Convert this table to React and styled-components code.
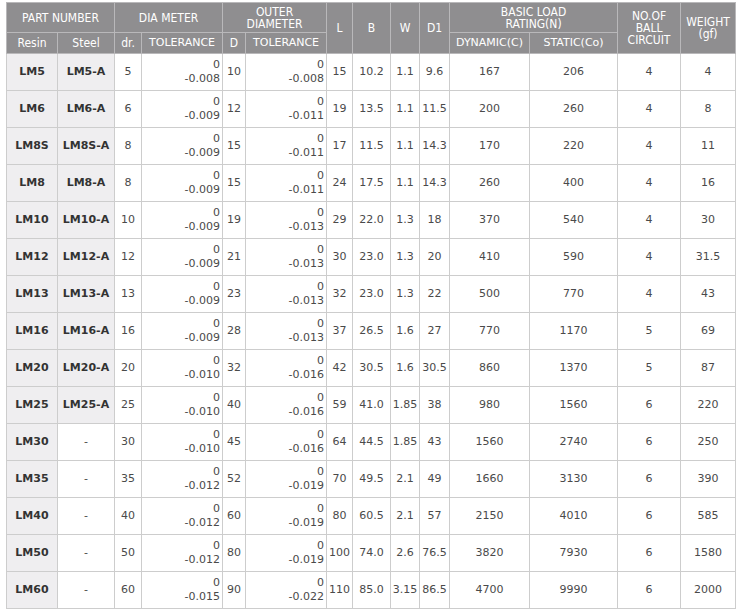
import React from "react";
import styled, { createGlobalStyle } from "styled-components";

const GlobalStyle = createGlobalStyle`
  body {
    margin: 0;
    background: #ffffff;
  }
`;

const Page = styled.div`
  padding: 2px 0 0 6px;
`;

const Table = styled.table`
  border-collapse: collapse;
  table-layout: fixed;
  width: 729px;
  font-family: "DejaVu Sans", Verdana, sans-serif;
  font-size: 11px;
  color: #4a4a4a;
`;

const Head = styled.th`
  background: #8f8e90;
  color: #ffffff;
  font-weight: normal;
  font-family: ${(p) =>
    p.wide
      ? '"DejaVu Sans", Verdana, sans-serif'
      : '"DejaVu Sans Condensed", "Liberation Sans", sans-serif'};
  font-size: ${(p) => (p.wide ? "11px" : "12px")};
  line-height: 12px;
  border: 1px solid #b9b8ba;
  padding: 0;
  height: ${(p) => p.h || "auto"};
  text-align: center;
  vertical-align: middle;
`;

const Row = styled.tr`
  height: 37px;
`;

const Cell = styled.td`
  border: 1px solid #cdcdcd;
  padding: 0 ${(p) => (p.right ? "2px" : "0")} 0 0;
  text-align: ${(p) => (p.right ? "right" : "center")};
  vertical-align: middle;
  line-height: 14px;
  background: ${(p) => (p.shade ? "#efeef0" : "#ffffff")};
  font-weight: ${(p) => (p.bold ? "bold" : "normal")};
  color: ${(p) => (p.bold ? "#333333" : "#4a4a4a")};
`;

const Tol = styled.span`
  display: block;
`;

const widths = [51, 57, 27, 81, 23, 81, 26, 38, 29, 30, 80, 88, 63, 55];

const rows = [
  ["LM5", "LM5-A", "5", "-0.008", "10", "-0.008", "15", "10.2", "1.1", "9.6", "167", "206", "4", "4"],
  ["LM6", "LM6-A", "6", "-0.009", "12", "-0.011", "19", "13.5", "1.1", "11.5", "200", "260", "4", "8"],
  ["LM8S", "LM8S-A", "8", "-0.009", "15", "-0.011", "17", "11.5", "1.1", "14.3", "170", "220", "4", "11"],
  ["LM8", "LM8-A", "8", "-0.009", "15", "-0.011", "24", "17.5", "1.1", "14.3", "260", "400", "4", "16"],
  ["LM10", "LM10-A", "10", "-0.009", "19", "-0.013", "29", "22.0", "1.3", "18", "370", "540", "4", "30"],
  ["LM12", "LM12-A", "12", "-0.009", "21", "-0.013", "30", "23.0", "1.3", "20", "410", "590", "4", "31.5"],
  ["LM13", "LM13-A", "13", "-0.009", "23", "-0.013", "32", "23.0", "1.3", "22", "500", "770", "4", "43"],
  ["LM16", "LM16-A", "16", "-0.009", "28", "-0.013", "37", "26.5", "1.6", "27", "770", "1170", "5", "69"],
  ["LM20", "LM20-A", "20", "-0.010", "32", "-0.016", "42", "30.5", "1.6", "30.5", "860", "1370", "5", "87"],
  ["LM25", "LM25-A", "25", "-0.010", "40", "-0.016", "59", "41.0", "1.85", "38", "980", "1560", "6", "220"],
  ["LM30", "-", "30", "-0.010", "45", "-0.016", "64", "44.5", "1.85", "43", "1560", "2740", "6", "250"],
  ["LM35", "-", "35", "-0.012", "52", "-0.019", "70", "49.5", "2.1", "49", "1660", "3130", "6", "390"],
  ["LM40", "-", "40", "-0.012", "60", "-0.019", "80", "60.5", "2.1", "57", "2150", "4010", "6", "585"],
  ["LM50", "-", "50", "-0.012", "80", "-0.019", "100", "74.0", "2.6", "76.5", "3820", "7930", "6", "1580"],
  ["LM60", "-", "60", "-0.015", "90", "-0.022", "110", "85.0", "3.15", "86.5", "4700", "9990", "6", "2000"],
];

const Tolerance = ({ value }) => (
  <Cell right>
    <Tol>0</Tol>
    <Tol>{value}</Tol>
  </Cell>
);

export default function App() {
  return (
    <Page>
      <GlobalStyle />
      <Table>
        <colgroup>
          {widths.map((w, i) => (
            <col key={i} style={{ width: w }} />
          ))}
        </colgroup>
        <thead>
          <tr>
            <Head colSpan={2} h="29px">PART NUMBER</Head>
            <Head colSpan={2}>DIA METER</Head>
            <Head colSpan={2}>OUTER<br />DIAMETER</Head>
            <Head rowSpan={2}>L</Head>
            <Head rowSpan={2}>B</Head>
            <Head rowSpan={2}>W</Head>
            <Head rowSpan={2}>D1</Head>
            <Head colSpan={2}>BASIC LOAD<br />RATING(N)</Head>
            <Head rowSpan={2}>NO.OF<br />BALL<br />CIRCUIT</Head>
            <Head rowSpan={2}>WEIGHT<br />(gf)</Head>
          </tr>
          <tr>
            <Head h="20px">Resin</Head>
            <Head>Steel</Head>
            <Head>dr.</Head>
            <Head wide>TOLERANCE</Head>
            <Head>D</Head>
            <Head wide>TOLERANCE</Head>
            <Head wide>DYNAMIC(C)</Head>
            <Head wide>STATIC(Co)</Head>
          </tr>
        </thead>
        <tbody>
          {rows.map((r) => (
            <Row key={r[0]}>
              <Cell shade bold>{r[0]}</Cell>
              <Cell shade={r[1] !== "-"} bold={r[1] !== "-"}>{r[1]}</Cell>
              <Cell>{r[2]}</Cell>
              <Tolerance value={r[3]} />
              <Cell>{r[4]}</Cell>
              <Tolerance value={r[5]} />
              {r.slice(6).map((v, i) => (
                <Cell key={i}>{v}</Cell>
              ))}
            </Row>
          ))}
        </tbody>
      </Table>
    </Page>
  );
}
